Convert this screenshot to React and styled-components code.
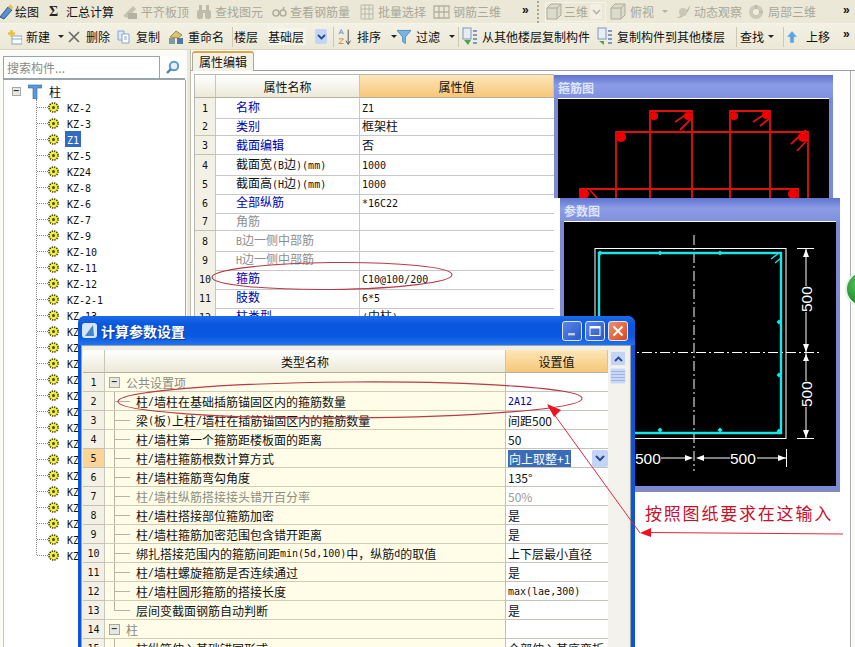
import React from "react";
import styled, { createGlobalStyle } from "styled-components";

const GlobalStyle = createGlobalStyle`
  html, body {
    margin: 0;
    padding: 0;
    overflow: hidden;
    background: #fff;
  }
  * { box-sizing: border-box; }
`;

// half-width latin runs, like the bitmap song face in the original
const Txt = ({ children }) =>
  String(children)
    .split(/([\x21-\x7e°]+)/)
    .map((part, i) => (i % 2 ? <Latin key={i}>{part}</Latin> : part));

const toolIcons = {
  pen: (
    <svg width="14" height="16" viewBox="0 0 14 16">
      <path d="M0 13 L8 3 L12 6 L4 15 Z" fill="#5b8fd0" stroke="#2d5a96" />
      <path d="M8 3 L10 0 L13 3 L12 6 Z" fill="#e5c35a" />
    </svg>
  ),
  align: (
    <svg width="16" height="16" viewBox="0 0 16 16">
      <path d="M1 12 L11 2 L14 5 L5 14 Z" fill="#c3c2b2" />
      <rect x="6" y="9" width="9" height="6" fill="#b3b2a2" />
    </svg>
  ),
  binoculars: (
    <svg width="16" height="16" viewBox="0 0 16 16" fill="#bdbcab">
      <rect x="1" y="6" width="6" height="9" rx="2" />
      <rect x="9" y="6" width="6" height="9" rx="2" />
      <rect x="3" y="1" width="3" height="6" />
      <rect x="10" y="1" width="3" height="6" />
      <rect x="6" y="6" width="4" height="3" />
    </svg>
  ),
  glasses: (
    <svg width="15" height="12" viewBox="0 0 15 12" fill="none" stroke="#b0af9f" strokeWidth="1.6">
      <circle cx="4" cy="7" r="3" />
      <circle cx="11" cy="7" r="3" />
      <path d="M7 6 L8 6 M11 4 L12 1" />
    </svg>
  ),
  grid: (
    <svg width="14" height="16" viewBox="0 0 14 16" fill="none" stroke="#b9b8a8">
      <path d="M1 1 H13 V15 H1 Z M1 5 H13 M1 10 H13 M5 1 V15 M9 1 V15" />
    </svg>
  ),
  grid3d: (
    <svg width="17" height="16" viewBox="0 0 17 16" fill="none" stroke="#b3b2a2" strokeWidth="1.3">
      <path d="M1 2 H16 V14 H1 Z M6 2 V14 M11 2 V14 M1 8 H16" />
    </svg>
  ),
  cube: (
    <svg width="16" height="17" viewBox="0 0 16 17" fill="#dcdbcb" stroke="#adac9c">
      <path d="M1 5 L5 1 H15 V12 L11 16 H1 Z" />
      <path d="M1 5 H11 V16 M11 5 L15 1" fill="none" />
    </svg>
  ),
  orbit: (
    <svg width="16" height="16" viewBox="0 0 16 16">
      <path d="M1 14 C5 13 12 7 15 1 C15 7 9 15 1 14 Z" fill="#bdbcab" />
      <circle cx="8" cy="8" r="4" fill="#c9c8b8" />
    </svg>
  ),
  part: (
    <svg width="16" height="16" viewBox="0 0 16 16">
      <circle cx="8" cy="8" r="7" fill="#cbcaba" />
      <circle cx="8" cy="8" r="3" fill="#efeddd" />
      <path d="M8 1 V5 M15 8 H11" stroke="#a9a898" />
    </svg>
  ),
  add: (
    <svg width="14" height="16" viewBox="0 0 14 16">
      <rect x="4" y="7" width="10" height="8" fill="#fff" stroke="#7fa5d4" />
      <path d="M4 10 H14" stroke="#7fa5d4" />
      <path d="M3.5 1 V8 M0 4.5 H7" stroke="#e8c040" strokeWidth="2.4" />
    </svg>
  ),
  remove: (
    <svg width="12" height="12" viewBox="0 0 12 12" stroke="#6d6d68" strokeWidth="1.7">
      <path d="M1 1 L11 11 M11 1 L1 11" />
    </svg>
  ),
  copy: (
    <svg width="13" height="14" viewBox="0 0 13 14" fill="#fff" stroke="#86a4c8">
      <path d="M1 1 H7 V10 H1 Z" fill="#dce7f4" />
      <path d="M5 4 H12 V13 H5 Z" />
      <path d="M7 7 H10 M7 9 H10" />
    </svg>
  ),
  rename: (
    <svg width="15" height="16" viewBox="0 0 15 16">
      <path d="M2 8 L8 2 L14 6 L10 9 Z" fill="#d9c27a" stroke="#a08c48" />
      <rect x="1" y="9" width="6" height="6" fill="#7d9c9a" />
      <rect x="9" y="9" width="6" height="6" fill="#4f79a8" />
    </svg>
  ),
  sort: (
    <svg width="14" height="18" viewBox="0 0 14 18">
      <path d="M1 6 L3.5 1 L6 6 M2 4.5 H5" fill="none" stroke="#6c8ec4" />
      <path d="M1 11 H6 L1 16 H6" fill="none" stroke="#cc8b3c" />
      <path d="M11 1 V16 M8.5 13 L11 17 L13.5 13" fill="none" stroke="#4b4b4b" />
    </svg>
  ),
  filter: (
    <svg width="15" height="15" viewBox="0 0 15 15">
      <path d="M0 1 H15 L9 8 V15 L6 13 V8 Z" fill="#7ab4e0" stroke="#4f8ec2" />
    </svg>
  ),
  copyIn: (
    <svg width="16" height="19" viewBox="0 0 16 19">
      <rect x="1" y="1" width="8" height="11" fill="#e7ecf6" stroke="#8296b8" />
      <path d="M11 4 H15 M11 8 H15 M11 12 H15 M11 16 H15" stroke="#7f9cc8" strokeWidth="2" />
      <path d="M2 13 L6 18 L9 13 Z" fill="#4aa64a" />
    </svg>
  ),
  copyOut: (
    <svg width="15" height="19" viewBox="0 0 15 19">
      <rect x="1" y="1" width="8" height="11" fill="#e7ecf6" stroke="#8296b8" />
      <path d="M11 4 H15 M11 8 H15 M11 12 H15 M11 16 H15" stroke="#7f9cc8" strokeWidth="2" />
      <path d="M2 14 H7 V18 Z" fill="#4aa64a" />
    </svg>
  ),
  up: (
    <svg width="10" height="12" viewBox="0 0 10 12">
      <path d="M5 0 L10 6 H7 V12 H3 V6 H0 Z" fill="#58a4e0" stroke="#bcdcf4" strokeWidth="0.6" />
    </svg>
  ),
};

const topItems = [
  { w: 49, gap: 1, icon: "pen", label: "绘图" },
  { w: 73, gap: 8, sigma: true, label: "汇总计算" },
  { w: 74, gap: 3, icon: "align", label: "平齐板顶", off: true },
  { w: 76, gap: 3, icon: "binoculars", label: "查找图元", off: true },
  { w: 88, gap: 3, icon: "glasses", label: "查看钢筋量", off: true },
  { w: 73, gap: 4, icon: "grid", label: "批量选择", off: true },
  { w: 89, gap: 3, icon: "grid3d", label: "钢筋三维", off: true },
];

const topItemsRight = [
  { w: 65, gap: 4, icon: "cube", label: "俯视", off: true, caret: true },
  { w: 73, gap: 3, icon: "orbit", label: "动态观察", off: true },
  { w: 95, gap: 4, icon: "part", label: "局部三维", off: true },
];

const propRows = [
  ["名称", "Z1", "link"],
  ["类别", "框架柱", "link"],
  ["截面编辑", "否", "link"],
  ["截面宽(B边)(mm)", "1000"],
  ["截面高(H边)(mm)", "1000"],
  ["全部纵筋", "*16C22", "link"],
  ["角筋", "", "off"],
  ["B边一侧中部筋", "", "off"],
  ["H边一侧中部筋", "", "off"],
  ["箍筋", "C10@100/200", "link"],
  ["肢数", "6*5", "link"],
  ["柱类型", "(中柱)", "link"],
];

const paramRows = [
  { group: true, name: "公共设置项", value: "" },
  { name: "柱/墙柱在基础插筋锚固区内的箍筋数量", value: "2A12", blue: true },
  { name: "梁(板)上柱/墙柱在插筋锚固区内的箍筋数量", value: "间距500", plain: true },
  { name: "柱/墙柱第一个箍筋距楼板面的距离", value: "50", plain: true },
  { name: "柱/墙柱箍筋根数计算方式", value: "向上取整+1", active: true },
  { name: "柱/墙柱箍筋弯勾角度", value: "135°", plain: true },
  { name: "柱/墙柱纵筋搭接接头错开百分率", value: "50%", off: true, plain: true },
  { name: "柱/墙柱搭接部位箍筋加密", value: "是" },
  { name: "柱/墙柱箍筋加密范围包含错开距离", value: "是" },
  { name: "绑扎搭接范围内的箍筋间距min(5d,100)中，纵筋d的取值", value: "上下层最小直径" },
  { name: "柱/墙柱螺旋箍筋是否连续通过", value: "是" },
  { name: "柱/墙柱圆形箍筋的搭接长度", value: "max(lae,300)" },
  { name: "层间变截面钢筋自动判断", value: "是", last: true },
  { group: true, name: "柱", value: "" },
  { name: "柱纵筋伸入基础锚固形式", value: "全部伸入基底弯折", last: true },
];

// rows below KZ-13 sit behind the dialog, only their first letters show
const treeItems = [
  "KZ-2", "KZ-3", "Z1", "KZ-5", "KZ24", "KZ-8", "KZ-6", "KZ-7", "KZ-9", "KZ-10",
  "KZ-11", "KZ-12", "KZ-2-1", "KZ-13",
  ...Array(15).fill("KZ"),
];

const DoubleArrow = () => <More>»</More>;

const Tool = ({ item }) => (
  <ToolItem $w={item.w} $gap={item.gap} $off={item.off}>
    {item.sigma ? <Sigma>Σ</Sigma> : toolIcons[item.icon]}
    <span>{item.label}</span>
    {item.caret && <Caret $off={item.off} />}
  </ToolItem>
);

const TopToolbar = () => (
  <ToolRow>
    {topItems.map((item) => (
      <Tool key={item.label} item={item} />
    ))}
    <MoreSlot $w={12}><DoubleArrow /></MoreSlot>
    <Grip />
    <ViewCombo>
      {toolIcons.cube}
      <span>三维</span>
      <ComboButton $off>
        <svg width="9" height="6" viewBox="0 0 9 6"><path d="M1 1 L4.5 4.5 L8 1" fill="none" stroke="#b5b5a8" strokeWidth="1.6" /></svg>
      </ComboButton>
    </ViewCombo>
    {topItemsRight.map((item) => (
      <Tool key={item.label} item={item} />
    ))}
    <MoreSlot $w={12}><DoubleArrow /></MoreSlot>
  </ToolRow>
);

const EditToolbar = () => (
  <EditRow>
    <Tool item={{ w: 60, gap: 4, icon: "add", label: "新建", caret: true }} />
    <Tool item={{ w: 49, gap: 6, icon: "remove", label: "删除" }} />
    <Tool item={{ w: 51, gap: 6, icon: "copy", label: "复制" }} />
    <Tool item={{ w: 62, gap: 5, icon: "rename", label: "重命名" }} />
    <Sep $w={4} />
    <ToolItem $w={34} $gap={0}><span>楼层</span></ToolItem>
    <FloorCombo>
      <FloorText>基础层</FloorText>
      <ComboButton>
        <svg width="9" height="6" viewBox="0 0 9 6"><path d="M1 1 L4.5 4.5 L8 1" fill="none" stroke="#2a4a8c" strokeWidth="1.8" /></svg>
      </ComboButton>
    </FloorCombo>
    <Sep $w={10} />
    <Tool item={{ w: 59, gap: 6, icon: "sort", label: "排序", caret: true }} />
    <Tool item={{ w: 58, gap: 5, icon: "filter", label: "过滤", caret: true }} />
    <Sep $w={7} />
    <Tool item={{ w: 135, gap: 4, icon: "copyIn", label: "从其他楼层复制构件" }} />
    <Tool item={{ w: 136, gap: 5, icon: "copyOut", label: "复制构件到其他楼层" }} />
    <Sep $w={7} />
    <Tool item={{ w: 39, gap: 0, label: "查找", caret: true }} />
    <Sep $w={8} />
    <Tool item={{ w: 56, gap: 9, icon: "up", label: "上移" }} />
    <MoreSlot $w={12}><DoubleArrow /></MoreSlot>
  </EditRow>
);

const GearIcon = () => (
  <svg width="11" height="11" viewBox="0 0 11 11">
    <circle cx="5.5" cy="5.5" r="4.6" fill="#f2ee30" stroke="#3a3a10" strokeWidth="1.5" strokeDasharray="1.4 1" />
    <circle cx="5.5" cy="5.5" r="1.5" fill="#4a4a10" />
  </svg>
);

const LeftPane = () => (
  <Pane>
    <SearchRow>
      <SearchInput>搜索构件...</SearchInput>
      <SearchButton>
        <svg width="15" height="15" viewBox="0 0 15 15" fill="none">
          <circle cx="9" cy="6" r="4.2" stroke="#5f9cc4" strokeWidth="2" fill="#e4f1f8" />
          <path d="M6 9 L2 13" stroke="#4684ac" strokeWidth="2.4" />
        </svg>
      </SearchButton>
    </SearchRow>
    <Tree>
      <TreeRoot>
        <Expander $small>−</Expander>
        <svg width="14" height="15" viewBox="0 0 14 15">
          <path d="M0 1 H14 V4 H9 V15 H5 V4 H0 Z" fill="#5c9ad6" stroke="#2a64a0" strokeWidth="0.6" />
        </svg>
        <span>柱</span>
      </TreeRoot>
      <TreeList>
        {treeItems.map((name, i) => (
          <TreeRow key={i}>
            <TreeTick />
            <GearIcon />
            <TreeLabel $selected={name === "Z1"}><Txt>{name}</Txt></TreeLabel>
          </TreeRow>
        ))}
      </TreeList>
    </Tree>
  </Pane>
);

const PropertyTable = () => (
  <PropGrid>
    <PropHead>
      <HeadCell />
      <HeadCell>属性名称</HeadCell>
      <HeadCell $active>属性值</HeadCell>
    </PropHead>
    {propRows.map(([name, value, kind], i) => (
      <PropRow key={name}>
        <NumCell><Txt>{i + 1}</Txt></NumCell>
        <PropName $kind={kind}><Txt>{name}</Txt></PropName>
        <PropValue><Txt>{value}</Txt></PropValue>
      </PropRow>
    ))}
  </PropGrid>
);

const StirrupDrawing = () => (
  <svg width="271" height="102" viewBox="558 98 271 102">
    <g fill="none" stroke="#e01010" strokeWidth="1.8">
      <path d="M650 200 V111 H692 V200" />
      <path d="M730 200 V111 H770 V200" />
      <path d="M616 200 V132 H808 V200" />
      <path d="M580 200 V189 H798 V200" />
      <path d="M675 122 L690 112 M680 130 L692 118" />
      <path d="M753 122 L768 112 M760 126 L770 118" />
      <path d="M791 144 L806 130 M797 151 L808 139" />
      <path d="M590 190 L597 198" />
    </g>
    <g fill="#f00000">
      <circle cx="654" cy="116" r="4" />
      <circle cx="688" cy="116" r="4" />
      <circle cx="734" cy="116" r="4" />
      <circle cx="766" cy="115" r="4" />
      <circle cx="621" cy="137" r="5" />
      <circle cx="803" cy="137" r="5" />
      <circle cx="584" cy="194" r="5" />
      <circle cx="793" cy="194" r="5" />
    </g>
  </svg>
);

const ParamDrawing = () => (
  <svg width="271" height="267" viewBox="564 220 271 267">
    <g fill="none" stroke="#fff">
      <rect x="595" y="247.5" width="191" height="190" />
      <path d="M694 234 V470" strokeDasharray="10 3 2 3" />
      <path d="M570 351.5 H820" strokeDasharray="10 3 2 3" />
      <path d="M797 247.5 H814 M797 437.5 H814 M806 248 V285 M806 311 V380 M806 406 V437" />
      <path d="M786.5 448 V466 M661 457 H690 M700 457 H730 M757 457 H786" />
    </g>
    <g fill="#fff">
      <path d="M806 248 L803 256 H809 Z M806 351 L803 343 H809 Z M806 353 L803 360 H809 Z M806 437 L803 429 H809 Z" />
      <path d="M693 457 L685 454 V460 Z M696 457 L704 454 V460 Z M786 457 L778 454 V460 Z" />
      <NumberText x="635" y="463">500</NumberText>
      <NumberText x="730" y="463">500</NumberText>
      <NumberText transform="translate(812 311) rotate(-90)">500</NumberText>
      <NumberText transform="translate(812 406) rotate(-90)">500</NumberText>
    </g>
    <path d="M599 436 V252 H781 V432 H560" fill="none" stroke="#19e6e6" strokeWidth="2.4" />
    <path d="M771 258 L779 252 M775 262 L781 257" stroke="#19e6e6" strokeWidth="1.4" />
    <g fill="#19e6e6">
      {[[600, 252], [660, 252], [720, 252], [779, 321], [779, 374], [779, 430], [660, 429], [720, 429]].map(([x, y]) => (
        <path key={`${x}-${y}`} d={`M${x} ${y - 2.5} L${x + 2.5} ${y} L${x} ${y + 2.5} L${x - 2.5} ${y} Z`} />
      ))}
    </g>
  </svg>
);

const ParamDialog = () => (
  <Dialog>
    <TitleBar>
      <AppIcon>
        <svg width="15" height="15" viewBox="0 0 15 15">
          <rect width="15" height="15" rx="3" fill="#d5e6f6" />
          <path d="M3 13 L11 2 L12 13 Z" fill="#3f86cc" />
        </svg>
      </AppIcon>
      <TitleText>计算参数设置</TitleText>
      <WindowButtons>
        <WinButton>
          <svg width="10" height="10" viewBox="0 0 10 10"><rect x="1" y="7" width="7" height="2.4" fill="#bcd0f4" /></svg>
        </WinButton>
        <WinButton>
          <svg width="12" height="12" viewBox="0 0 12 12" fill="none" stroke="#fff"><rect x="1" y="1.5" width="10" height="9" /><path d="M1 2.5 H11" strokeWidth="2" /></svg>
        </WinButton>
        <WinButton $close>
          <svg width="12" height="12" viewBox="0 0 12 12" stroke="#fff" strokeWidth="2"><path d="M1.5 1.5 L10.5 10.5 M10.5 1.5 L1.5 10.5" /></svg>
        </WinButton>
      </WindowButtons>
    </TitleBar>
    <DialogClient>
      <ParamGrid>
        <ParamHead>
          <HeadCell />
          <HeadCell>类型名称</HeadCell>
          <HeadCell $active>设置值</HeadCell>
        </ParamHead>
        {paramRows.map((row, i) => (
          <ParamRow key={row.name}>
            <NumCell $active={row.active}><Txt>{i + 1}</Txt></NumCell>
            <ParamName $off={row.off || row.group}>
              {row.group ? (
                <Expander>−</Expander>
              ) : (
                <Branch $last={row.last} />
              )}
              <Txt>{row.name}</Txt>
            </ParamName>
            <ParamValue $off={row.off} $blue={row.blue}>
              {row.active ? (
                <>
                  <Selected>{row.value}</Selected>
                  <ComboButton $wide>
                    <svg width="10" height="7" viewBox="0 0 10 7"><path d="M1 1 L5 5 L9 1" fill="none" stroke="#2a4a8c" strokeWidth="2" /></svg>
                  </ComboButton>
                </>
              ) : row.plain ? (
                row.value
              ) : (
                <Txt>{row.value}</Txt>
              )}
            </ParamValue>
          </ParamRow>
        ))}
      </ParamGrid>
      <ScrollTrack>
        <ScrollUp>
          <svg width="9" height="6" viewBox="0 0 9 6"><path d="M1 5 L4.5 1.5 L8 5" fill="none" stroke="#2a4a8c" strokeWidth="1.8" /></svg>
        </ScrollUp>
        <ScrollThumb />
      </ScrollTrack>
    </DialogClient>
  </Dialog>
);

const App = () => (
  <Screen>
    <GlobalStyle />
    <TopToolbar />
    <EditToolbar />
    <Body>
      <LeftPane />
      <Splitter />
      <RightPane>
        <TabStrip>
          <Tab>属性编辑</Tab>
        </TabStrip>
        <TabContent>
          <PropertyTable />
        </TabContent>
      </RightPane>
    </Body>

    <FloatPanel $left={554} $top={75} $width={279} $height={123} $covered>
      <PanelTitle>箍筋图</PanelTitle>
      <PanelCanvas><StirrupDrawing /></PanelCanvas>
    </FloatPanel>
    <FloatPanel $left={560} $top={198} $width={280} $height={294}>
      <PanelTitle>参数图</PanelTitle>
      <PanelCanvas><ParamDrawing /></PanelCanvas>
    </FloatPanel>
    <GreenKnob />
    <ParamDialog />

    <Annotations width="855" height="647" viewBox="0 0 855 647">
      <g fill="none" stroke="#b93a48" strokeWidth="1.1">
        <ellipse cx="332" cy="276" rx="120" ry="13.5" transform="rotate(-0.6 332 276)" />
        <ellipse cx="350" cy="400" rx="232" ry="18" transform="rotate(-0.4 350 400)" />
      </g>
      <path d="M548 406 L640 533 M650 532.5 L843 534" fill="none" stroke="#e0283c" strokeWidth="1" />
      <path d="M547 404 L554 417 L561 410 Z" fill="#f01020" />
      <path d="M640 533 L651 528 L651 537 Z" fill="#f01020" />
    </Annotations>
    <Callout>按照图纸要求在这输入</Callout>
  </Screen>
);

export default App;

const Screen = styled.div`
  position: relative;
  width: 855px;
  height: 647px;
  overflow: hidden;
  background: #fff;
  color: #111;
  font: 12px "Noto Sans CJK SC", "Liberation Sans", sans-serif;
`;

const Latin = styled.span`
  font-family: "DejaVu Sans Mono", "Liberation Mono", monospace;
  font-size: 10px;
`;

const ToolRow = styled.div`
  display: flex;
  align-items: center;
  height: 24px;
  background: #ebe8d7;
  border-bottom: 1px solid #f6f4e8;
  white-space: nowrap;
`;

const EditRow = styled(ToolRow)`
  height: 26px;
  padding-left: 8px;
  background: linear-gradient(#f3f1e4, #ebe8d7);
  border-bottom: 1px solid #d8d5c2;
`;

const ToolItem = styled.div`
  display: flex;
  align-items: center;
  flex: none;
  width: ${(p) => p.$w}px;
  gap: ${(p) => p.$gap}px;
  color: ${(p) => (p.$off ? "#a9a797" : "#111")};
`;

const Sigma = styled.span`
  width: 9px;
  font: bold 14px "Liberation Serif", serif;
  color: #222;
`;

const Caret = styled.i`
  flex: none;
  margin-left: 4px;
  width: 0;
  height: 0;
  border-left: 3px solid transparent;
  border-right: 3px solid transparent;
  border-top: 3px solid ${(p) => (p.$off ? "#b5b3a3" : "#222")};
`;

const MoreSlot = styled.div`
  flex: none;
  width: ${(p) => p.$w}px;
  align-self: flex-start;
`;

const More = styled.span`
  font: bold 12px/14px "Liberation Sans", sans-serif;
`;

const Grip = styled.div`
  flex: none;
  width: 11px;
  height: 22px;
  padding-left: 3px;
  &::before {
    content: "";
    display: block;
    height: 100%;
    border-left: 2px dotted #a9a797;
  }
`;

const ViewCombo = styled.div`
  display: flex;
  flex: none;
  align-items: center;
  gap: 2px;
  width: 61px;
  height: 20px;
  margin-right: 4px;
  color: #a9a797;
  border: 1px solid #f6f4ea;
`;

const ComboButton = styled.span`
  display: flex;
  flex: none;
  align-items: center;
  justify-content: center;
  width: ${(p) => (p.$wide ? 16 : 12)}px;
  height: ${(p) => (p.$wide ? 17 : 15)}px;
  margin-left: ${(p) => (p.$wide ? "auto" : "0")};
  background: ${(p) => (p.$off ? "#f2f0e4" : "#c3d4f6")};
  border-radius: 2px;
`;

const FloorCombo = styled.div`
  display: flex;
  flex: none;
  align-items: center;
  width: 60px;
  gap: 9px;
`;

const FloorText = styled.span`
  width: 38px;
  background: #f7f5ea;
`;

const Sep = styled.div`
  flex: none;
  width: ${(p) => p.$w}px;
  height: 20px;
  background: linear-gradient(#cbc8b4, #cbc8b4) center / 1px 100% no-repeat;
`;

const Body = styled.div`
  display: flex;
  height: 597px;
  background: #fbfbf6;
`;

const Pane = styled.div`
  flex: none;
  width: 187px;
  padding: 6px 0 0 3px;
`;

const SearchRow = styled.div`
  display: flex;
  height: 24px;
`;

const SearchInput = styled.div`
  width: 157px;
  padding-left: 3px;
  line-height: 21px;
  color: #8a8a84;
  background: #fff;
  border: 1px solid #9aa4ac;
  border-bottom-width: 2px;
`;

const SearchButton = styled.div`
  display: flex;
  align-items: center;
  justify-content: center;
  width: 25px;
  background: #fff;
  border-bottom: 2px solid #9aa4ac;
`;

const Tree = styled.div`
  height: 580px;
  width: 183px;
  background: #fff;
  border-right: 1px solid #a4a8a8;
  border-left: 1px solid #c8ccc8;
`;

const TreeRoot = styled.div`
  display: flex;
  align-items: center;
  height: 19px;
  padding: 3px 0 0 8px;
  gap: 7px;
`;

const Expander = styled.span`
  display: inline-flex;
  align-items: center;
  justify-content: center;
  flex: none;
  width: ${(p) => (p.$small ? 9 : 11)}px;
  height: ${(p) => (p.$small ? 9 : 11)}px;
  margin-right: ${(p) => (p.$small ? "0" : "6px")};
  font: bold 10px/1 "Liberation Sans", sans-serif;
  color: #333;
  background: #e8e8e0;
  border: 1px solid #a8a89c;
`;

const TreeList = styled.div`
  height: 456px;
  margin-left: 32px;
  border-left: 1px dotted #888;
`;

const TreeRow = styled.div`
  display: flex;
  align-items: center;
  height: 16px;
`;

const TreeTick = styled.span`
  flex: none;
  width: 11px;
  border-top: 1px dotted #888;
`;

const TreeLabel = styled.span`
  margin-left: 6px;
  padding: 0 2px;
  line-height: 15px;
  background: ${(p) => (p.$selected ? "#316ac5" : "#fff")};
  color: ${(p) => (p.$selected ? "#fff" : "#111")};
`;

const Splitter = styled.div`
  flex: none;
  width: 4px;
  background: #ece9d8;
  border-right: 1px solid #bdbdb0;
`;

const RightPane = styled.div`
  flex: 1;
  display: flex;
  flex-direction: column;
  min-width: 0;
`;

const TabStrip = styled.div`
  height: 21px;
  padding: 1px 0 0 1px;
  background: #fff;
  border-bottom: 1px solid #9a9fa8;
`;

const Tab = styled.div`
  width: 62px;
  height: 20px;
  padding-left: 6px;
  line-height: 18px;
  background: #f4f2e6;
  border: 1px solid #a8a89c;
  border-top: 2px solid #e8a040;
  border-bottom: 0;
  border-radius: 3px 3px 0 0;
`;

const TabContent = styled.div`
  flex: 1;
  width: 660px;
  padding: 3px 0 0 3px;
  background: #fff;
  border-right: 1px solid #a8acb4;
`;

const PropGrid = styled.div`
  width: 360px;
  border-top: 1px solid #b8b8b0;
  border-left: 1px solid #b8b8b0;
`;

const PropHead = styled.div`
  display: grid;
  grid-template-columns: 21px 144px 194px;
  height: 23px;
`;

const PropRow = styled(PropHead)`
  height: 19px;
`;

const HeadCell = styled.div`
  display: flex;
  align-items: center;
  justify-content: center;
  background: ${(p) =>
    p.$active
      ? "linear-gradient(#fde6b8, #f6c778)"
      : "linear-gradient(#fff, #ece9d8)"};
  border-right: 1px solid #c8c6b8;
  border-bottom: 1px solid #b4b2a4;
`;

const NumCell = styled.div`
  display: flex;
  align-items: center;
  justify-content: center;
  background: ${(p) => (p.$active ? "#fbd596" : "#f3f1e6")};
  border-right: 1px solid #c8c6b8;
  border-bottom: 1px solid #c4c2b4;
`;

const nameColors = { link: "#0000b0", off: "#8e8e8e" };

const PropName = styled.div`
  padding-left: 20px;
  line-height: 18px;
  white-space: nowrap;
  color: ${(p) => nameColors[p.$kind] || "#111"};
  border-right: 1px solid #c8c8c8;
  border-bottom: 1px solid #c8c8c8;
`;

const PropValue = styled.div`
  padding-left: 2px;
  line-height: 18px;
  white-space: nowrap;
  border-bottom: 1px solid #c8c8c8;
`;

const FloatPanel = styled.div`
  position: absolute;
  left: ${(p) => p.$left}px;
  top: ${(p) => p.$top}px;
  width: ${(p) => p.$width}px;
  height: ${(p) => p.$height}px;
  padding: ${(p) => (p.$covered ? "0 4px" : "0 4px 5px")};
  background: #7c8ad6;
  border-bottom: ${(p) => (p.$covered ? "0" : "1px solid #8c8c94")};
`;

const PanelTitle = styled.div`
  height: 23px;
  margin: 0 -4px;
  padding-left: 4px;
  font-size: 12px;
  font-weight: 700;
  line-height: 25px;
  color: #dfe6fb;
  background: linear-gradient(#5f74cf, #8c9ce6 45%, #7f90de);
`;

const PanelCanvas = styled.div`
  height: calc(100% - 23px);
  overflow: hidden;
  background: #000;
  border-top: 1px solid #fff;
  & > svg { display: block; margin-top: -1px; }
`;

const NumberText = styled.text`
  font: 15.5px "Liberation Sans", sans-serif;
  fill: #fff;
`;

const GreenKnob = styled.div`
  position: absolute;
  left: 845px;
  top: 271px;
  width: 36px;
  height: 36px;
  border-radius: 50%;
  background: radial-gradient(circle at 35% 35%, #5cc060, #138a20 70%);
  border: 2px solid #e6eee6;
`;

const Dialog = styled.div`
  position: absolute;
  left: 78px;
  top: 316px;
  width: 557px;
  height: 340px;
  background: #0d55d8;
  border-radius: 7px 7px 0 0;
`;

const TitleBar = styled.div`
  display: flex;
  align-items: center;
  height: 29px;
  padding: 0 7px 0 4px;
  background: linear-gradient(#1a6cec, #0a56dc 30%, #0a58e0 70%, #1f74f0);
  border-radius: 7px 7px 0 0;
`;

const AppIcon = styled.span`
  display: flex;
  flex: none;
  margin-right: 4px;
`;

const TitleText = styled.span`
  font-size: 14px;
  font-weight: 700;
  color: #fff;
  text-shadow: 1px 1px 0 #0a3aa0;
`;

const WindowButtons = styled.div`
  display: flex;
  gap: 3px;
  margin-left: auto;
`;

const WinButton = styled.span`
  display: flex;
  align-items: center;
  justify-content: center;
  width: 20px;
  height: 20px;
  background: ${(p) =>
    p.$close
      ? "linear-gradient(135deg, #f09070, #d8481c)"
      : "linear-gradient(135deg, #5a86e8, #2a58c8)"};
  border: 1px solid #dfe8fb;
  border-radius: 3px;
`;

const DialogClient = styled.div`
  display: flex;
  align-items: flex-start;
  height: 311px;
  margin: 0 4px 0 3px;
  padding: 4px 4px 0 1px;
  background: #f1efe4;
  border: 1px solid #9aa4ac;
  border-bottom: 0;
`;

const ParamGrid = styled.div`
  width: 525px;
  background: #fff;
`;

const ParamHead = styled.div`
  display: grid;
  grid-template-columns: 22px 401px 102px;
  height: 23px;
`;

const ParamRow = styled(ParamHead)`
  height: 19px;
`;

const ParamName = styled.div`
  position: relative;
  display: flex;
  align-items: center;
  padding-left: 4px;
  white-space: nowrap;
  overflow: hidden;
  color: ${(p) => (p.$off ? "#8c8c80" : "#111")};
  background: #fffde8;
  border-right: 1px solid #c4c2a8;
  border-bottom: 1px solid #cfcdb4;
`;

const Branch = styled.span`
  flex: none;
  width: 27px;
  &::before {
    content: "";
    position: absolute;
    left: 9px;
    top: 0;
    height: ${(p) => (p.$last ? "50%" : "100%")};
    border-left: 1px solid #b4b4a4;
  }
  &::after {
    content: "";
    position: absolute;
    left: 9px;
    top: 50%;
    width: 16px;
    border-top: 1px solid #b4b4a4;
  }
`;

const ParamValue = styled.div`
  display: flex;
  align-items: center;
  padding-left: 2px;
  white-space: nowrap;
  overflow: hidden;
  color: ${(p) => (p.$blue ? "#0000a8" : p.$off ? "#9a9a9a" : "#111")};
  background: #fff;
  border-bottom: 1px solid #c4c4bc;
`;

const Selected = styled.span`
  padding: 0 1px;
  color: #fff;
  background: #3a6cb8;
`;

const ScrollTrack = styled.div`
  flex: none;
  width: 20px;
  height: 305px;
  padding: 1px 2px 0;
  background: #f3f2ec;
`;

const ScrollUp = styled.div`
  display: flex;
  align-items: center;
  justify-content: center;
  height: 15px;
  background: #c4d4f4;
  border: 1px solid #e8eefb;
  border-radius: 2px;
`;

const ScrollThumb = styled.div`
  height: 16px;
  margin-top: 2px;
  background: repeating-linear-gradient(#c8d8f6 0 2px, #9db4e0 2px 3px);
  border: 1px solid #dfe8fb;
  border-radius: 2px;
`;

const Annotations = styled.svg`
  position: absolute;
  left: 0;
  top: 0;
  pointer-events: none;
`;

const Callout = styled.div`
  position: absolute;
  left: 645px;
  top: 500px;
  font-size: 17px;
  line-height: 26px;
  letter-spacing: 1.8px;
  white-space: nowrap;
  color: #c8102c;
`;
